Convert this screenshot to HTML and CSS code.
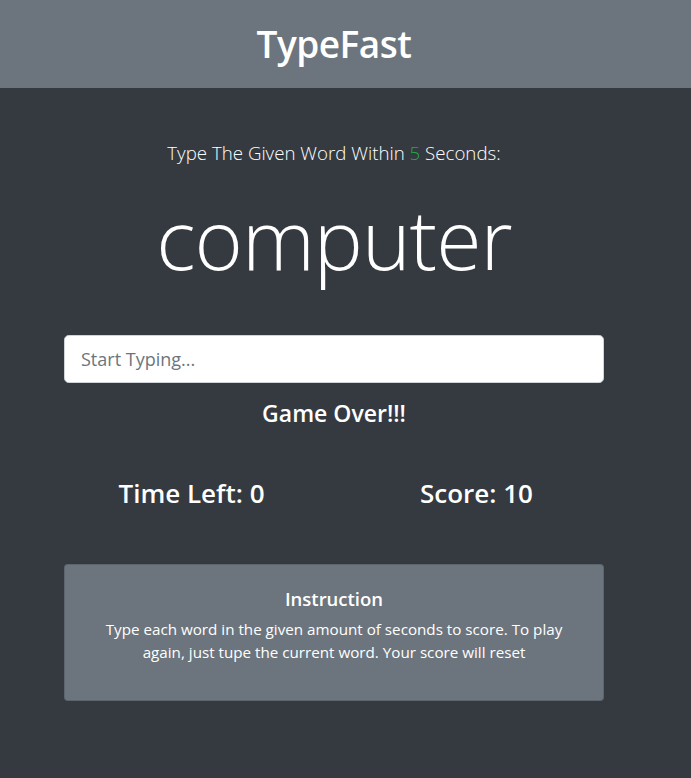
FILE: index.html
```html
<!DOCTYPE html>
<html lang="en">
<head>
<meta charset="utf-8">
<title>TypeFast</title>
<link rel="stylesheet" href="styles.css">
</head>
<body>
<header class="topbar">
  <div class="wrap">
    <h1 class="brand">TypeFast</h1>
  </div>
</header>
<main class="wrap">
  <div class="container">
    <p class="lead">Type The Given Word Within <span class="secs">5</span> Seconds:</p>
    <h2 class="word">computer</h2>
    <input class="typing" type="text" placeholder="Start Typing...">
    <h4 class="message">Game Over!!!</h4>
    <div class="stats">
      <h3 class="stat">Time Left: <span>0</span></h3>
      <h3 class="stat">Score: <span>10</span></h3>
    </div>
    <div class="card">
      <h5 class="card-title">Instruction</h5>
      <p class="card-text">Type each word in the given amount of seconds to score. To play again, just tupe the current word. Your score will reset</p>
    </div>
  </div>
</main>
</body>
</html>
```
FILE: styles.css
```css
* { box-sizing: border-box; }
html, body { height: 100%; }
body {
  margin: 0;
  background: #343a40;
  color: #fff;
  font-family: "Open Sans", "Noto Sans", sans-serif;
  font-size: 16px;
  line-height: 1.5;
}
.topbar {
  background: #6c757d;
  height: 88px;
  display: flex;
  align-items: center;
}
.wrap {
  width: 100%;
  padding-right: 23px;
}
.brand {
  margin: 0;
  text-align: center;
  font-size: 37px;
  font-weight: 600;
  line-height: 1.2;
  letter-spacing: -0.5px;
}
.container {
  width: 540px;
  margin: 0 auto;
  text-align: center;
}
.lead {
  margin: 50px 0 0;
  font-size: 18.7px;
  font-weight: 300;
  line-height: 30px;
}
.secs { color: #28a745; }
.word {
  margin: 21px 0 0;
  font-size: 82.5px;
  font-weight: 300;
  line-height: 1.2;
  letter-spacing: -1px;
}
.typing {
  display: block;
  width: 100%;
  height: 48px;
  margin-top: 47px;
  padding: 8px 16px;
  font-family: inherit;
  font-size: 18px;
  color: #495057;
  background: #fff;
  border: 1px solid #ced4da;
  border-radius: 4.8px;
}
.typing::placeholder { color: #6c757d; }
.message {
  margin: 17px 0 0;
  font-size: 23px;
  font-weight: 600;
  line-height: 1.2;
}
.stats {
  display: grid;
  grid-template-columns: 285px 285px;
  justify-content: center;
  margin-top: 50px;
}
.stat {
  margin: 0;
  font-size: 26px;
  font-weight: 600;
  line-height: 1.2;
}
.card {
  margin-top: 55px;
  background: #6c757d;
  border: 1px solid rgba(0,0,0,.125);
  border-radius: 4px;
  height: 137px;
  padding: 23px 40px;
}
.card-title {
  margin: 0 0 8px;
  font-size: 18.5px;
  font-weight: 600;
  line-height: 1.2;
}
.card-text {
  margin: 0;
  font-size: 15.2px;
  line-height: 23px;
}
```
